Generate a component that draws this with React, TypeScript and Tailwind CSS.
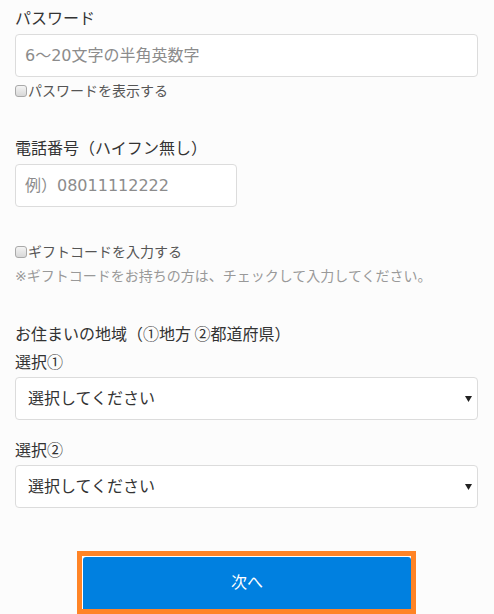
import { useState } from "react"

const font = { fontFamily: '"DejaVu Sans", "Noto Sans CJK JP", sans-serif' }
const cjk = { fontFamily: '"Noto Sans CJK JP", sans-serif' }

function CheckRow({ label }: { label: string }) {
  const [checked, setChecked] = useState(false)
  return (
    <label className="flex items-center h-[20px] text-[14px] leading-[20px] text-[#555] cursor-pointer">
      <input
        type="checkbox"
        checked={checked}
        onChange={(e) => setChecked(e.target.checked)}
        className="appearance-none w-[12px] h-[12px] mr-[1px] rounded-[3px] border border-[#a9a9a9] bg-gradient-to-b from-[#f4f4f4] to-[#d8d8d8] checked:bg-[#0080e0]"
      />
      {label}
    </label>
  )
}

function SelectBox({ options }: { options: string[] }) {
  return (
    <div className="relative mt-[4px]">
      <select className="appearance-none w-full h-[43px] rounded-[4px] border border-[#dcdcdc] bg-white pl-[12px] text-[16px] text-[#333] outline-none">
        {options.map((o) => (
          <option key={o}>{o}</option>
        ))}
      </select>
      <svg className="absolute right-[6px] top-[18px] pointer-events-none" width="7" height="7" viewBox="0 0 7 7">
        <path d="M0 1h7L3.5 7z" fill="#222" />
      </svg>
    </div>
  )
}

export default function App() {
  return (
    <div className="min-h-[614px] bg-[#fcfcfc] pl-[15px] pr-[16px] pt-[7px]" style={font}>
      <div className="text-[16px] leading-[24px] text-[#333]">パスワード</div>
      <input
        type="password"
        placeholder="6～20文字の半角英数字"
        className="mt-[3px] block w-full h-[43px] rounded-[4px] border border-[#dcdcdc] bg-white px-[9px] text-[16px] placeholder:text-[#8c8c8c] outline-none"
      />
      <div className="mt-[4px]">
        <CheckRow label="パスワードを表示する" />
      </div>

      <div className="mt-[36px] text-[16px] leading-[24px] text-[#333]">電話番号（ハイフン無し）</div>
      <input
        type="tel"
        placeholder="例）08011112222"
        className="mt-[3px] block w-[222px] h-[43px] rounded-[4px] border border-[#dcdcdc] bg-white px-[9px] text-[16px] placeholder:text-[#8c8c8c] outline-none"
      />

      <div className="mt-[35px]">
        <CheckRow label="ギフトコードを入力する" />
      </div>
      <p className="mt-[4px] text-[14px] leading-[20px] text-[#999]">
        ※ギフトコードをお持ちの方は、チェックして入力してください。
      </p>

      <div className="mt-[35px] text-[16px] leading-[24px] text-[#333]" style={cjk}>
        お住まいの地域（①地方 ②都道府県）
      </div>
      <div className="mt-[4px] text-[16px] leading-[24px] text-[#333]" style={cjk}>
        選択①
      </div>
      <SelectBox options={["選択してください", "北海道", "東北", "関東", "中部", "近畿", "中国", "四国", "九州"]} />

      <div className="mt-[17px] text-[16px] leading-[24px] text-[#333]" style={cjk}>
        選択②
      </div>
      <SelectBox options={["選択してください"]} />

      <div className="flex justify-center pt-[43px]">
        <div className="border-[5px] border-[#ff8426] bg-white pt-[1px] pl-[1px]">
          <button className="block w-[328px] h-[52px] rounded-t-[3px] bg-[#0080e0] text-white text-[16px]">
            次へ
          </button>
        </div>
      </div>
    </div>
  )
}
